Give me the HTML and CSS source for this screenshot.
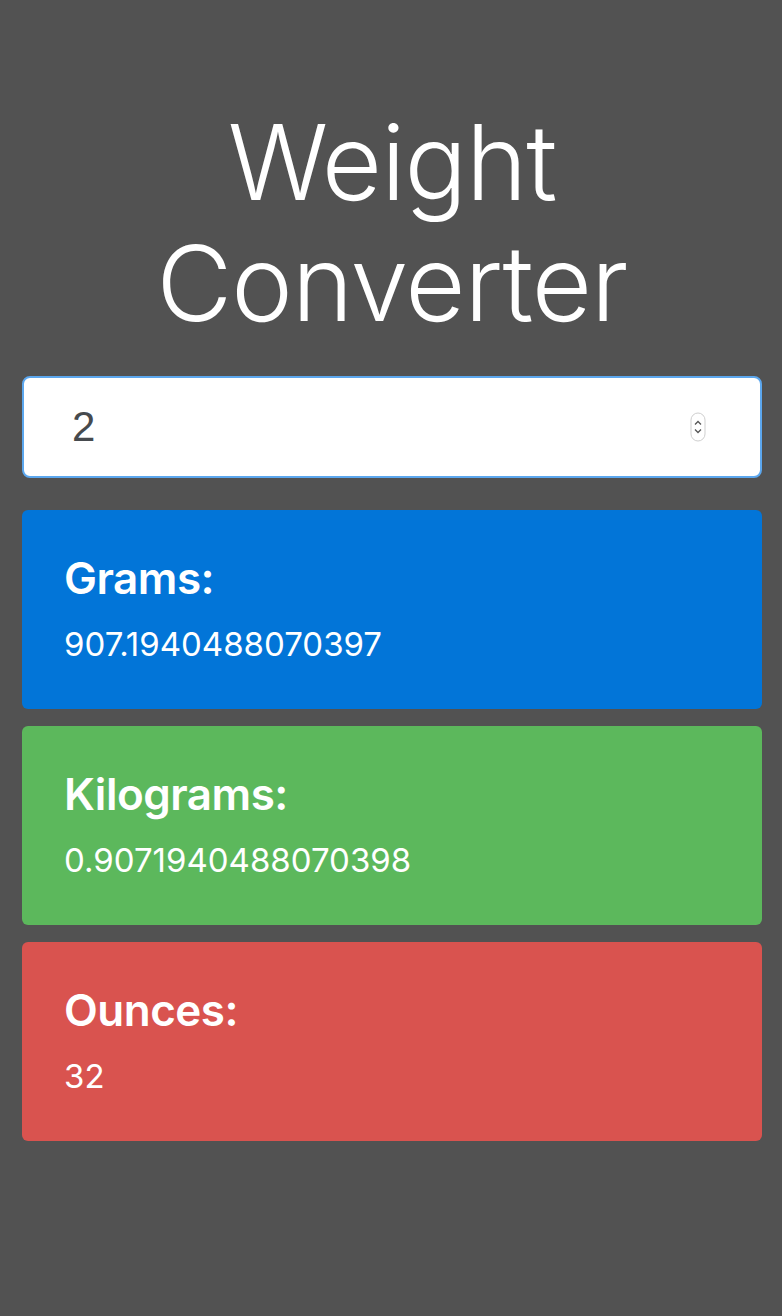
FILE: index.html
```html
<!DOCTYPE html>
<html lang="en">
<head>
<meta charset="utf-8">
<title>Weight Converter</title>
<link rel="stylesheet" href="styles.css">
</head>
<body>
<main class="container">
  <h1 class="title">Weight<br>Converter</h1>
  <div class="field">
    <span class="field-value">2</span>
    <svg class="spinner" width="16" height="30" viewBox="0 0 16 30" aria-hidden="true">
      <rect x="1" y="1" width="14" height="28" rx="7" fill="#fff" stroke="#cfcfcf" stroke-width="1"/>
      <path d="M5 12.5 L8 9.5 L11 12.5" fill="none" stroke="#555" stroke-width="1.3"/>
      <path d="M5 17.5 L8 20.5 L11 17.5" fill="none" stroke="#555" stroke-width="1.3"/>
    </svg>
  </div>
  <section class="card card-blue">
    <h4 class="card-title">Grams:</h4>
    <div class="card-value">907.1940488070397</div>
  </section>
  <section class="card card-green">
    <h4 class="card-title">Kilograms:</h4>
    <div class="card-value">0.9071940488070398</div>
  </section>
  <section class="card card-red">
    <h4 class="card-title">Ounces:</h4>
    <div class="card-value">32</div>
  </section>
</main>
</body>
</html>
```
FILE: styles.css
```css
* { box-sizing: border-box; }
html, body { margin: 0; padding: 0; }
body {
  background: #525252;
  font-family: Inter, "Noto Sans", "Liberation Sans", sans-serif;
  color: #fff;
  min-height: 1316px;
}
.container {
  padding: 102px 20px 0 22px;
  display: flex;
  flex-direction: column;
}
.title {
  margin: 0 0 32px;
  text-align: center;
  font-weight: 300;
  font-size: 104px;
  line-height: 121px;
  letter-spacing: -1px;
}
.field {
  height: 102px;
  background: #fff;
  border: 2px solid #5ca7ee;
  border-radius: 8px;
  display: flex;
  align-items: center;
  justify-content: space-between;
  padding: 0 54px 0 48px;
  margin-bottom: 32px;
}
.field-value {
  color: #464a4e;
  font-size: 42px;
  font-family: "Liberation Sans", Arial, sans-serif;
}
.spinner { display: block; }
.card {
  border-radius: 6px;
  height: 199px;
  padding: 42px 42px;
  margin-bottom: 17px;
}
.card-blue { background: #0275d8; }
.card-green { background: #5cb85c; }
.card-red { background: #d9534f; }
.card-title {
  margin: 0 0 18px;
  font-size: 44px;
  font-weight: 600;
  line-height: 1.2;
  letter-spacing: -0.5px;
}
.card-value {
  font-size: 33px;
  font-weight: 400;
  line-height: 1.3;
}
```
